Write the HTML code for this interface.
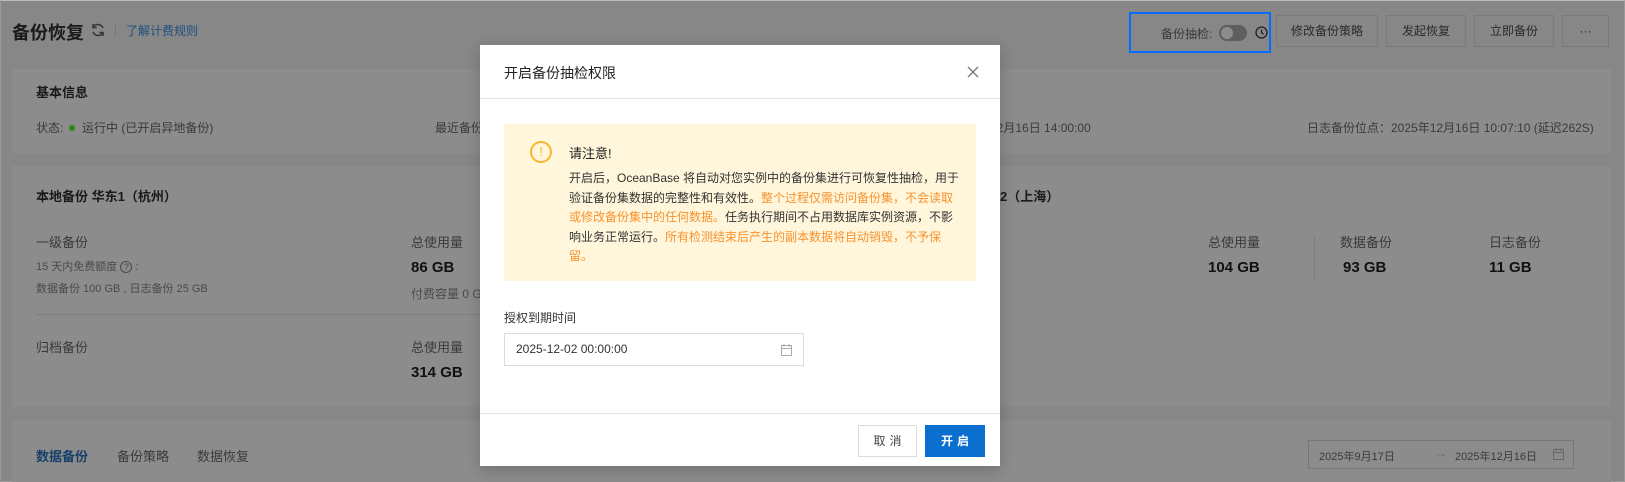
<!DOCTYPE html>
<html><head><meta charset="utf-8"><style>
*{margin:0;padding:0;box-sizing:border-box}
body{width:1625px;height:482px;overflow:hidden;background:#878787;font-family:"Liberation Sans","Noto Sans CJK SC",sans-serif;font-size:12px;color:#2a2a2a;position:relative}
.a{position:absolute;white-space:nowrap}
.card{position:absolute;background:#8c8c8c}
.btn{position:absolute;border:1px solid #7a7a7a;height:32px;line-height:30px;text-align:center;color:#2a2a2a;font-size:12px}
.g{color:#3a3a3a}
.b{font-weight:bold;font-size:15px;color:#111}
</style></head><body>
<div style="position:absolute;inset:0;border:1px solid #9a9a9a;border-top-color:#bbb"></div>
<div class="a" style="left:12px;top:19px;font-size:18px;font-weight:bold;color:#1a1a1a">备份恢复</div>
<svg class="a" style="left:90px;top:22px" width="16" height="16" viewBox="0 0 16 16" fill="none" stroke="#333" stroke-width="1.5"><path d="M13 6A5.5 5.5 0 0 0 3 5.5M3 10a5.5 5.5 0 0 0 10 .5"/><path d="M3 2v3.5h3.5M13 14v-3.5H9.5"/></svg>
<div class="a" style="left:115px;top:23px;width:1px;height:14px;background:#777"></div>
<div class="a" style="left:126px;top:22px;color:#1d4f80">了解计费规则</div>

<div class="a" style="left:1129px;top:12px;width:142px;height:41px;border:2px solid #0a6cff"></div>
<div class="a g" style="left:1161px;top:25px">备份抽检:</div>
<div class="a" style="left:1219px;top:25px;width:28px;height:16px;border-radius:8px;background:#5e5e5e"></div>
<div class="a" style="left:1221px;top:27px;width:12px;height:12px;border-radius:6px;background:#8c8c8c"></div>
<svg class="a" style="left:1255px;top:26px" width="13" height="13" viewBox="0 0 13 13" fill="none" stroke="#222" stroke-width="1.3"><circle cx="6.5" cy="6.5" r="5.5"/><path d="M6.5 3.5v3.2l2 1.5"/></svg>
<div class="btn" style="left:1276px;top:15px;width:102px">修改备份策略</div>
<div class="btn" style="left:1386px;top:15px;width:80px">发起恢复</div>
<div class="btn" style="left:1474px;top:15px;width:80px">立即备份</div>
<div class="btn" style="left:1562px;top:15px;width:47px">···</div>

<div class="card" style="left:12px;top:69px;width:1599px;height:84px"></div>
<div class="a" style="left:36px;top:82px;font-size:13px;font-weight:bold;color:#1a1a1a">基本信息</div>
<div class="a g" style="left:36px;top:119px">状态: <span style="display:inline-block;width:6px;height:6px;border-radius:3px;background:#2a8a12;margin:0 4px 1px 2px"></span> 运行中 (已开启异地备份)</div>
<div class="a g" style="left:435px;top:119px">最近备份</div>
<div class="a g" style="left:990px;top:119px">12月16日 14:00:00</div>
<div class="a g" style="left:1307px;top:119px">日志备份位点：2025年12月16日 10:07:10 (延迟262S)</div>

<div class="card" style="left:12px;top:166px;width:1599px;height:241px"></div>
<div class="a" style="left:36px;top:186px;font-size:13px;font-weight:bold;color:#1a1a1a">本地备份 华东1（杭州）</div>
<div class="a" style="left:1000px;top:186px;font-size:13px;font-weight:bold;color:#1a1a1a">2（上海）</div>
<div class="a g" style="left:36px;top:232px;font-size:13px">一级备份</div>
<div class="a" style="left:36px;top:258px;color:#4a4a4a;font-size:11px">15 天内免费额度 <span style="display:inline-block;width:12px;height:12px;border:1px solid #4a4a4a;border-radius:6px;font-size:9px;line-height:10px;text-align:center">?</span> :</div>
<div class="a" style="left:36px;top:280px;color:#4a4a4a;font-size:11px">数据备份 100 GB , 日志备份 25 GB</div>
<div class="a" style="left:36px;top:314px;width:444px;height:1px;background:#7e7e7e"></div>
<div class="a g" style="left:36px;top:337px;font-size:13px">归档备份</div>
<div class="a g" style="left:411px;top:232px;font-size:13px">总使用量</div>
<div class="a b" style="left:411px;top:259px">86 GB</div>
<div class="a" style="left:411px;top:285px;color:#4a4a4a">付费容量 0 G</div>
<div class="a g" style="left:411px;top:337px;font-size:13px">总使用量</div>
<div class="a b" style="left:411px;top:364px">314 GB</div>
<div class="a g" style="left:1208px;top:232px;font-size:13px">总使用量</div>
<div class="a b" style="left:1208px;top:259px">104 GB</div>
<div class="a" style="left:1314px;top:236px;width:1px;height:46px;background:#7e7e7e"></div>
<div class="a g" style="left:1340px;top:232px;font-size:13px">数据备份</div>
<div class="a b" style="left:1343px;top:259px">93 GB</div>
<div class="a g" style="left:1489px;top:232px;font-size:13px">日志备份</div>
<div class="a b" style="left:1489px;top:259px">11 GB</div>

<div class="card" style="left:12px;top:420px;width:1599px;height:62px"></div>
<div class="a" style="left:36px;top:446px;font-size:13px;color:#163f6a;font-weight:bold">数据备份</div>
<div class="a g" style="left:117px;top:446px;font-size:13px">备份策略</div>
<div class="a g" style="left:197px;top:446px;font-size:13px">数据恢复</div>
<div class="a" style="left:1308px;top:440px;width:266px;height:29px;border:1px solid #777"></div>
<div class="a g" style="left:1319px;top:448px;font-size:11px">2025年9月17日</div>
<div class="a" style="left:1435px;top:446px;color:#666">→</div>
<div class="a g" style="left:1455px;top:448px;font-size:11px">2025年12月16日</div>
<svg class="a" style="left:1553px;top:448px" width="11" height="12" viewBox="0 0 11 12" fill="none" stroke="#6a6a6a"><rect x=".5" y="1.5" width="10" height="10"/><path d="M.5 4.5h10M3 0v3M8 0v3"/></svg>

<div class="a" style="left:480px;top:45px;width:520px;height:421px;background:#fff;box-shadow:0 4px 14px rgba(0,0,0,.2)"></div>
<div class="a" style="left:504px;top:63px;font-size:14px;color:#222">开启备份抽检权限</div>
<svg class="a" style="left:967px;top:66px" width="12" height="12" viewBox="0 0 12 12" stroke="#777" stroke-width="1.3"><path d="M1 1l10 10M11 1L1 11"/></svg>
<div class="a" style="left:480px;top:98px;width:520px;height:1px;background:#e3e3e3"></div>
<div class="a" style="left:504px;top:124px;width:472px;height:157px;background:#fff6db"></div>
<div class="a" style="left:530px;top:141px;width:22px;height:22px;border:2px solid #f9b530;border-radius:50%;color:#f9b530;text-align:center;line-height:18px;font-size:13px">!</div>
<div class="a" style="left:569px;top:143px;font-size:13px;color:#222">请注意!</div>
<div class="a" style="left:569px;top:169px;font-size:12px;line-height:19.6px;color:#333">开启后，OceanBase 将自动对您实例中的备份集进行可恢复性抽检，用于<br>验证备份集数据的完整性和有效性。<span style="color:#f7922f">整个过程仅需访问备份集，不会读取<br>或修改备份集中的任何数据。</span>任务执行期间不占用数据库实例资源，不影<br>响业务正常运行。<span style="color:#f7922f">所有检测结束后产生的副本数据将自动销毁，不予保<br>留。</span></div>
<div class="a" style="left:504px;top:309px;color:#333">授权到期时间</div>
<div class="a" style="left:504px;top:333px;width:300px;height:33px;border:1px solid #dcdcdc"></div>
<div class="a" style="left:516px;top:342px;color:#333">2025-12-02 00:00:00</div>
<svg class="a" style="left:781px;top:344px" width="11" height="12" viewBox="0 0 11 12" fill="none" stroke="#aaa"><rect x=".5" y="1.5" width="10" height="10"/><path d="M.5 4.5h10M3 0v3M8 0v3"/></svg>
<div class="a" style="left:480px;top:413px;width:520px;height:1px;background:#e3e3e3"></div>
<div class="a" style="left:858px;top:425px;width:59px;height:32px;border:1px solid #dcdcdc;text-align:center;line-height:30px;color:#444;letter-spacing:4px;padding-left:4px">取消</div>
<div class="a" style="left:925px;top:425px;width:60px;height:32px;background:#0b6fd0;text-align:center;line-height:32px;color:#fff;font-weight:bold;letter-spacing:4px;padding-left:4px">开启</div>
</body></html>
